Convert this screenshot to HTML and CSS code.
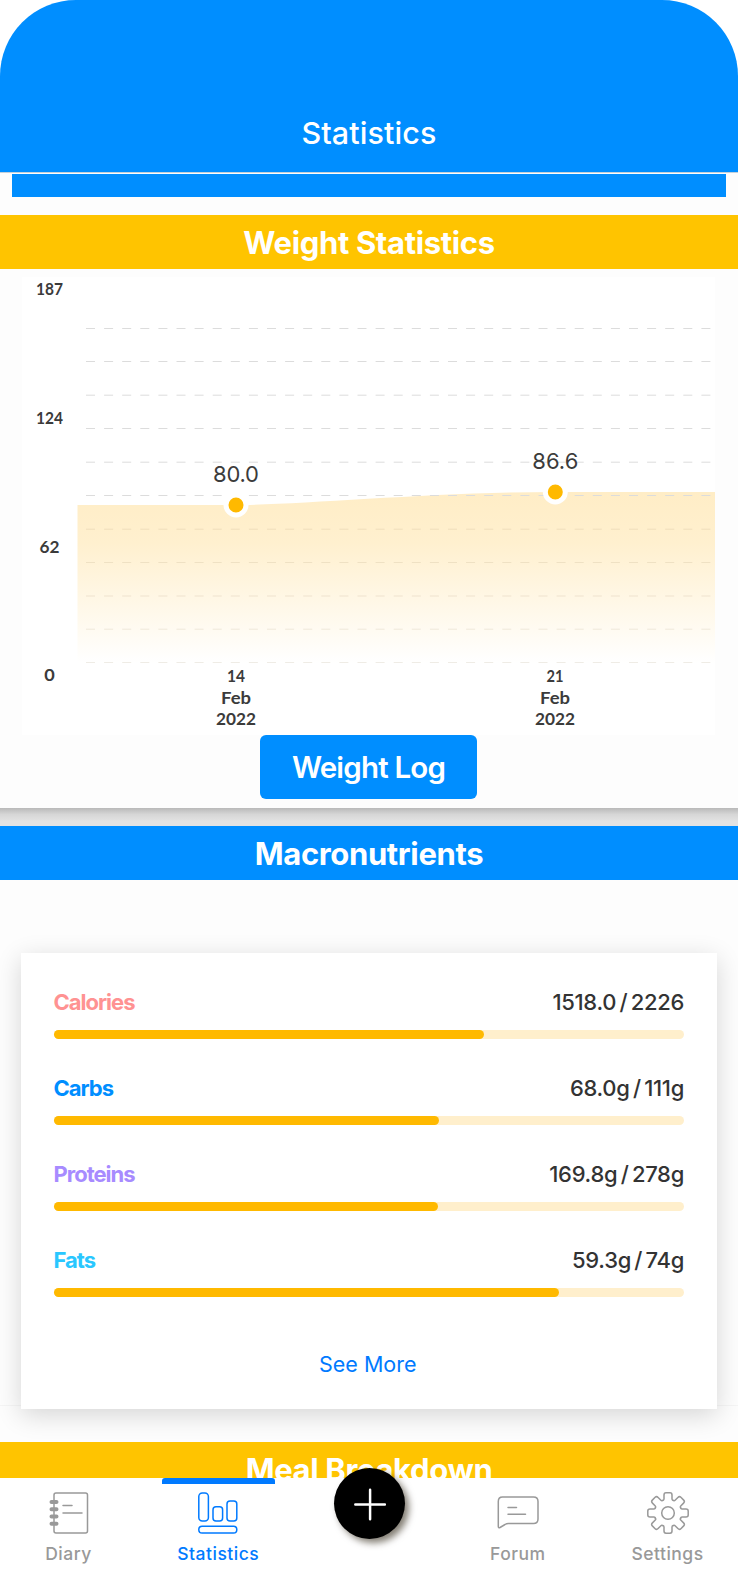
FILE: index.html
```html
<!DOCTYPE html>
<html lang="en">
<head>
    <meta charset="utf-8">
    <meta name="viewport" content="width=device-width">
    <title>Statistics</title>
    <link rel="stylesheet" href="styles.css">
</head>
<body>

<header class="header">
    <h1>Statistics</h1>
</header>

<main class="content">
    <div class="strip"></div>

    <section class="weight">
        <h2 class="band band-yellow">Weight Statistics</h2>
        <svg class="chart" viewBox="22 277 693 458">
            <defs>
                <linearGradient id="fade" x1="0" y1="0" x2="0" y2="1">
                    <stop offset="0" stop-color="#ffedc6"/>
                    <stop offset="0.3" stop-color="#fff0cf"/>
                    <stop offset="1" stop-color="#ffffff"/>
                </linearGradient>
            </defs>
            <path class="area" d="M77.5 505H236C300 505 435 492 555 492H715V663H77.5Z"/>
            <g class="grid">
                <path d="M86 328.5H712"/>
                <path d="M86 361.5H712"/>
                <path d="M86 395.2H712"/>
                <path d="M86 428.5H712"/>
                <path d="M86 462.2H712"/>
                <path d="M86 495.5H712"/>
            </g>
            <g class="grid grid-soft">
                <path d="M86 529.2H712"/>
                <path d="M86 562.5H712"/>
                <path d="M86 596H712"/>
                <path d="M86 629.2H712"/>
                <path d="M86 662.5H712"/>
            </g>
            <circle class="dot" cx="236" cy="505" r="10"/>
            <circle class="dot" cx="555.3" cy="492" r="10"/>
            <g class="values">
                <text x="236" y="481.5" textLength="46">80.0</text>
                <text x="555.3" y="468.5" textLength="46">86.6</text>
            </g>
            <g class="axis">
                <text x="49.5" y="295" textLength="27" lengthAdjust="spacingAndGlyphs">187</text>
                <text x="49.5" y="424" textLength="27" lengthAdjust="spacingAndGlyphs">124</text>
                <text x="49.5" y="552.5" textLength="20" lengthAdjust="spacingAndGlyphs">62</text>
                <text x="49.5" y="681" textLength="10.5" lengthAdjust="spacingAndGlyphs">0</text>
                <text x="236" y="682" textLength="18" lengthAdjust="spacingAndGlyphs">14</text>
                <text x="236" y="703.7" textLength="30" lengthAdjust="spacingAndGlyphs">Feb</text>
                <text x="236" y="725.3" textLength="40" lengthAdjust="spacingAndGlyphs">2022</text>
                <text x="555" y="682" textLength="17" lengthAdjust="spacingAndGlyphs">21</text>
                <text x="555" y="703.7" textLength="30" lengthAdjust="spacingAndGlyphs">Feb</text>
                <text x="555" y="725.3" textLength="40" lengthAdjust="spacingAndGlyphs">2022</text>
            </g>
        </svg>
        <button class="log-button">Weight Log</button>
    </section>

    <div class="divider"></div>

    <section class="macros">
        <h2 class="band band-blue">Macronutrients</h2>
        <div class="card">
            <div class="macro">
                <div class="macro-row"><b class="calories">Calories</b><span>1518.0 / 2226</span></div>
                <div class="bar"><div class="fill" style="width: 68.2%"></div></div>
            </div>
            <div class="macro">
                <div class="macro-row"><b class="carbs">Carbs</b><span>68.0g / 111g</span></div>
                <div class="bar"><div class="fill" style="width: 61.2%"></div></div>
            </div>
            <div class="macro">
                <div class="macro-row"><b class="proteins">Proteins</b><span>169.8g / 278g</span></div>
                <div class="bar"><div class="fill" style="width: 61%"></div></div>
            </div>
            <div class="macro">
                <div class="macro-row"><b class="fats">Fats</b><span>59.3g / 74g</span></div>
                <div class="bar"><div class="fill" style="width: 80.1%"></div></div>
            </div>
            <a class="more">See More</a>
        </div>
    </section>

    <h2 class="band band-yellow band-meal">Meal Breakdown</h2>
</main>

<nav class="tabs">
    <a class="tab">
        <svg class="icon" viewBox="0 0 42 42">
            <rect x="6" y="1" width="33.5" height="40" rx="2"/>
            <path d="M15 13.6h9M15 21h19"/>
            <g class="rings">
                <path d="M3.5 10h5M3.5 17.2h5M3.5 24.6h5M3.5 31.8h5"/>
            </g>
        </svg>
        <span>Diary</span>
    </a>
    <a class="tab active">
        <svg class="icon" viewBox="0 0 42 42">
            <rect x="1.8" y="1" width="9.6" height="28" rx="3.5"/>
            <rect x="16" y="14.7" width="9.6" height="14.3" rx="3"/>
            <rect x="30" y="9" width="9.8" height="20" rx="3"/>
            <rect x="1.8" y="34.3" width="38" height="6.7" rx="3.3"/>
        </svg>
        <span>Statistics</span>
    </a>
    <div class="tab-add">
        <a class="add">
            <svg viewBox="0 0 72 72">
                <path d="M36.6 22v30M21.6 37h30"/>
            </svg>
        </a>
    </div>
    <a class="tab">
        <svg class="icon" viewBox="0 0 42 42">
            <path d="M5.5 5H36.5Q41 5 41 9.5V27Q41 31.5 36.5 31.5H11.5Q9.5 31.5 8 32.5L3 35.5Q1.3 36.2 1.3 34.5V9.5Q1.3 5 5.5 5Z"/>
            <path d="M11 15.5h8.5M11 22.2h17.5"/>
        </svg>
        <span>Forum</span>
    </a>
    <a class="tab">
        <svg class="icon" viewBox="-21 -21 42 42">
            <defs>
                <path id="tooth" d="M-5.2 -12.6Q-4 -12.9 -4 -14V-18Q-4 -20.2 -2 -20.2H2Q4 -20.2 4 -18V-14Q4 -12.9 5.2 -12.6"/>
            </defs>
            <use href="#tooth"/>
            <use href="#tooth" transform="rotate(45)"/>
            <use href="#tooth" transform="rotate(90)"/>
            <use href="#tooth" transform="rotate(135)"/>
            <use href="#tooth" transform="rotate(180)"/>
            <use href="#tooth" transform="rotate(225)"/>
            <use href="#tooth" transform="rotate(270)"/>
            <use href="#tooth" transform="rotate(315)"/>
            <circle r="6.3"/>
        </svg>
        <span>Settings</span>
    </a>
</nav>

</body>
</html>
```
FILE: styles.css
```css
* {
    box-sizing: border-box;
}

body {
    display: flex;
    flex-direction: column;
    margin: 0;
    height: 1596px;
    overflow: hidden;
    background: #fff;
    color: #333;
    font-family: Inter, "Liberation Sans", sans-serif;
}

h1, h2 {
    margin: 0;
}

.header {
    flex: none;
    height: 173px;
    padding-top: 112px;
    background: #008eff;
    border-bottom: 1px solid #c4d0da;
    border-radius: 76px 76px 0 0;
    color: #fff;
    text-align: center;
}

.header h1 {
    font-size: 30.5px;
    font-weight: 500;
    line-height: 41px;
    letter-spacing: 0.1px;
}

.content {
    flex: 1;
    min-height: 0;
    overflow: hidden;
    background: #fdfdfd;
}

.strip {
    height: 23px;
    margin: 1px 12px 18px;
    background: #008eff;
}

.band {
    height: 54px;
    color: #fff;
    font-size: 31px;
    font-weight: 700;
    line-height: 55px;
    text-align: center;
    letter-spacing: -0.35px;
}

.band-yellow {
    background: #ffc400;
}

.band-blue {
    background: #008eff;
}

.weight {
    display: flex;
    flex-direction: column;
    height: 593px;
}

.chart {
    width: 693px;
    height: 458px;
    margin: 8px 0 0 22px;
    background: #fff;
}

.area {
    fill: url(#fade);
}

.grid {
    fill: none;
    stroke: #dcdcdc;
    stroke-dasharray: 9 9.1;
}

.grid-soft {
    stroke: #96825a;
    stroke-opacity: 0.15;
}

.dot {
    fill: #ffb900;
    stroke: #fff;
    stroke-width: 5px;
}

.chart text {
    fill: #3b3b3b;
    text-anchor: middle;
}

.values text {
    font-size: 22px;
}

.axis text {
    font-family: Lato, sans-serif;
    font-size: 17.5px;
    font-weight: 700;
}

.log-button {
    align-self: center;
    width: 217px;
    height: 64px;
    margin-right: 1px;
    padding: 0;
    border: 0;
    border-radius: 6px;
    background: #008eff;
    color: #fff;
    font: 600 29.5px Inter, sans-serif;
    letter-spacing: -0.8px;
}

.divider {
    height: 18px;
    background: linear-gradient(#b9b9b9, #d6d6d6 35%, #e3e3e3 75%);
}

.macros {
    height: 580px;
    border-bottom: 1px solid #f5f5f5;
}

.card {
    width: 696px;
    height: 456px;
    margin: 73px 0 0 21px;
    padding: 33px 33px 0 32.5px;
    background: #fff;
    box-shadow: 0 6px 24px rgba(0, 0, 0, 0.16);
    text-align: center;
}

.macro {
    height: 86px;
}

.macro-row {
    display: flex;
    justify-content: space-between;
    height: 44px;
    font-size: 22px;
    font-weight: 450;
    line-height: 32px;
    letter-spacing: -0.3px;
    word-spacing: -2.2px;
}

.macro-row b {
    font-weight: 700;
    letter-spacing: -1px;
}

.calories { color: #ff9292; }
.carbs { color: #008eff; }
.proteins { color: #a78bff; }
.fats { color: #29c7ff; }

.bar {
    height: 9px;
    border-radius: 5px;
    background: #ffefcc;
}

.fill {
    height: 9px;
    border-radius: 5px;
    background: #ffb900;
}

.more {
    display: block;
    margin: 19px 2px 0 0;
    color: #007aff;
    font-size: 21.5px;
    line-height: 30px;
}

.band-meal {
    margin-top: 36px;
}

.tabs {
    display: flex;
    flex: none;
    justify-content: space-between;
    height: 118px;
    padding: 0 14px 0 12px;
    background: #fff;
}

.tab {
    display: flex;
    flex-direction: column;
    align-items: center;
    width: 113px;
    padding-top: 14px;
    color: #999;
    font-size: 17.5px;
    font-weight: 500;
    line-height: 24px;
    letter-spacing: 0.5px;
}

.active {
    padding-top: 8px;
    border-top: 6px solid #007aff;
    height: 60px;
    border-radius: 3px;
    color: #007aff;
}

.icon {
    flex: none;
    width: 42px;
    height: 42px;
    margin-bottom: 8px;
    fill: none;
    stroke: currentColor;
    stroke-width: 1.5px;
    stroke-linecap: round;
    stroke-linejoin: round;
}

.rings {
    stroke-width: 4px;
}

.tab-add {
    width: 113px;
    padding-left: 22px;
}

.add {
    display: block;
    position: relative;
    width: 71px;
    height: 71px;
    margin-top: -10px;
    border-radius: 50%;
    background: #000;
    box-shadow: 4px 4px 7px rgba(30, 20, 0, 0.55);
}

.add svg {
    display: block;
    fill: none;
    stroke: #fff;
    stroke-width: 2.5px;
    stroke-linecap: round;
}
```
